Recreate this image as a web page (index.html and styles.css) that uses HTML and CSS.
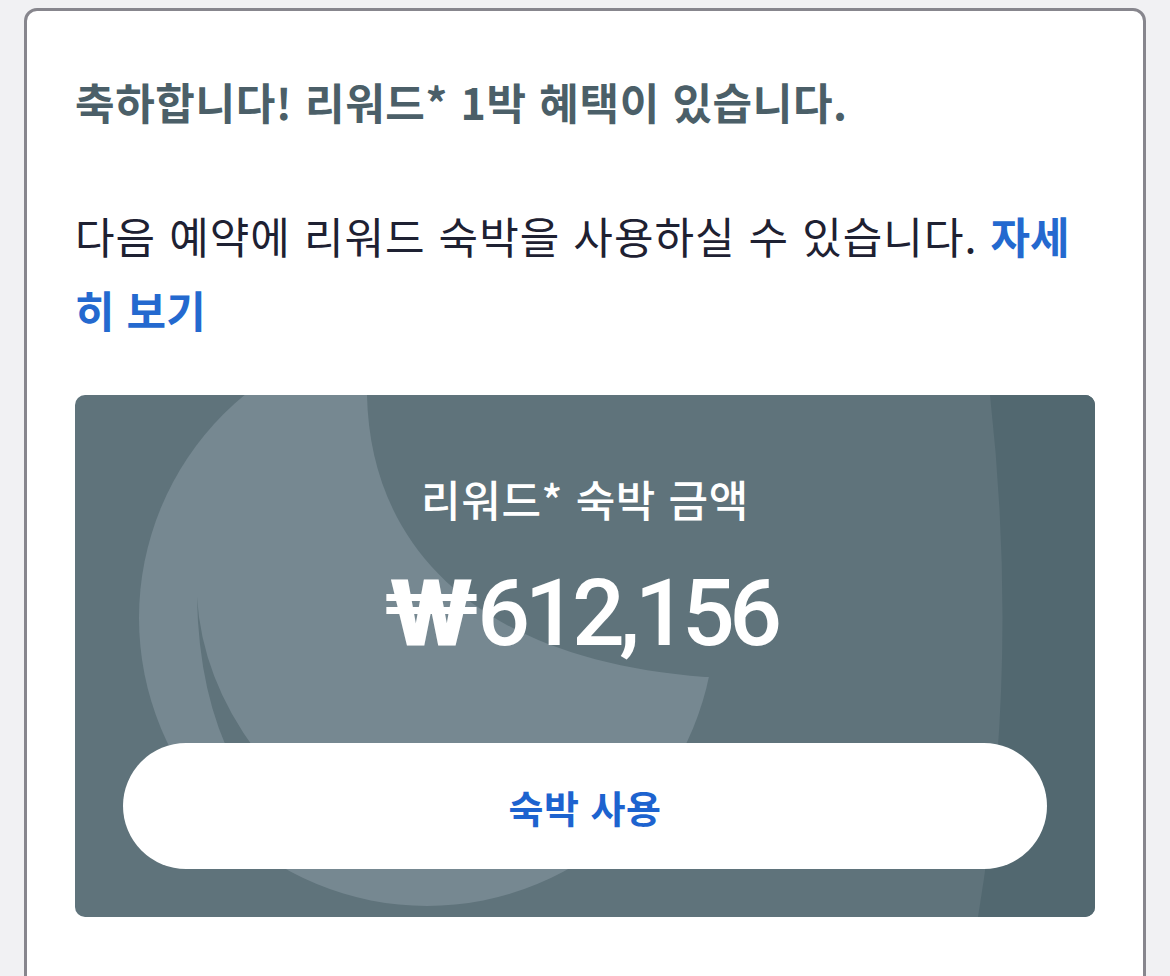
FILE: index.html
```html
<!DOCTYPE html>
<html lang="ko">
<head>
<meta charset="utf-8">
<title>리워드 숙박</title>
<link rel="stylesheet" href="styles.css">
</head>
<body>
  <div class="panel">
    <h1 class="title">축하합니다! 리워드* 1박 혜택이 있습니다.</h1>
    <p class="desc">다음 예약에 리워드 숙박을 사용하실 수 있습니다. <a class="more" href="#">자세히 보기</a></p>

    <section class="reward">
      <svg class="reward-bg" viewBox="0 0 1020 522" preserveAspectRatio="none" aria-hidden="true">
        <rect width="1020" height="522" fill="#5f737b"/>
        <circle cx="352" cy="223" r="288" fill="#768891"/>
        <path d="M292 -10 L292 0 C295 150 400 265 630 282 L1020 282 L1020 -10 Z" fill="#5f737b"/>
        <path d="M122 202 Q124 320 175 395 L205 385 Q128 300 122 202 Z" fill="#5f737b"/>
        <path d="M915 0 Q945 270 903 522 L1020 522 L1020 0 Z" fill="#526870"/>
      </svg>
      <div class="reward-label">리워드* 숙박 금액</div>
      <div class="reward-amount"><span class="currency">₩</span>612,156</div>
      <button class="reward-btn" type="button">숙박 사용</button>
    </section>
  </div>
</body>
</html>
```

FILE: styles.css
```css
html, body {
  height: 100%;
  overflow: hidden;
}

body {
  margin: 0;
  padding: 8px 24px 0;
  background: #f1f1f3;
  font-family: "Noto Sans CJK KR", "Noto Sans", sans-serif;
  box-sizing: border-box;
}

.panel {
  box-sizing: border-box;
  height: calc(100vh + 40px);
  background: #ffffff;
  border: 3px solid #87868d;
  border-radius: 13px;
  padding: 61px 48px 0;
  display: flex;
  flex-direction: column;
}

.title {
  margin: 0;
  font-size: 43px;
  line-height: 58px;
  letter-spacing: 0.6px;
  font-weight: 700;
  color: #4b5f68;
}

.desc {
  margin: 68px 0 0;
  font-size: 43px;
  line-height: 74px;
  letter-spacing: 1px;
  font-weight: 400;
  color: #1e2132;
}

.more {
  color: #2469cf;
  font-weight: 700;
  letter-spacing: 0;
  text-decoration: none;
}

.reward {
  position: relative;
  margin-top: 49px;
  height: 522px;
  flex-shrink: 0;
  box-sizing: border-box;
  border-radius: 10px;
  overflow: hidden;
  padding: 74px 48px 0;
  display: flex;
  flex-direction: column;
  align-items: center;
}

.reward-bg {
  position: absolute;
  inset: 0;
  width: 100%;
  height: 100%;
  z-index: 0;
}

.reward-label,
.reward-amount,
.reward-btn {
  position: relative;
  z-index: 1;
}

.reward-label {
  font-size: 43px;
  line-height: 58px;
  letter-spacing: 0.6px;
  font-weight: 500;
  color: #ffffff;
}

.reward-amount {
  margin-top: 37px;
  font-family: Roboto, "Noto Sans", sans-serif;
  font-size: 93px;
  line-height: 100px;
  font-weight: 500;
  letter-spacing: -5.5px;
  color: #ffffff;
}

.currency {
  display: inline-block;
  font-weight: 700;
  transform: scaleX(1.25);
  margin-right: 14px;
}

.reward-btn {
  margin-top: 79px;
  width: 100%;
  height: 126px;
  flex-shrink: 0;
  border: none;
  border-radius: 63px;
  background: #ffffff;
  font-family: "Noto Sans CJK KR", "Noto Sans", sans-serif;
  font-size: 38px;
  letter-spacing: 0.5px;
  font-weight: 700;
  color: #1d63cf;
  cursor: pointer;
}
```
